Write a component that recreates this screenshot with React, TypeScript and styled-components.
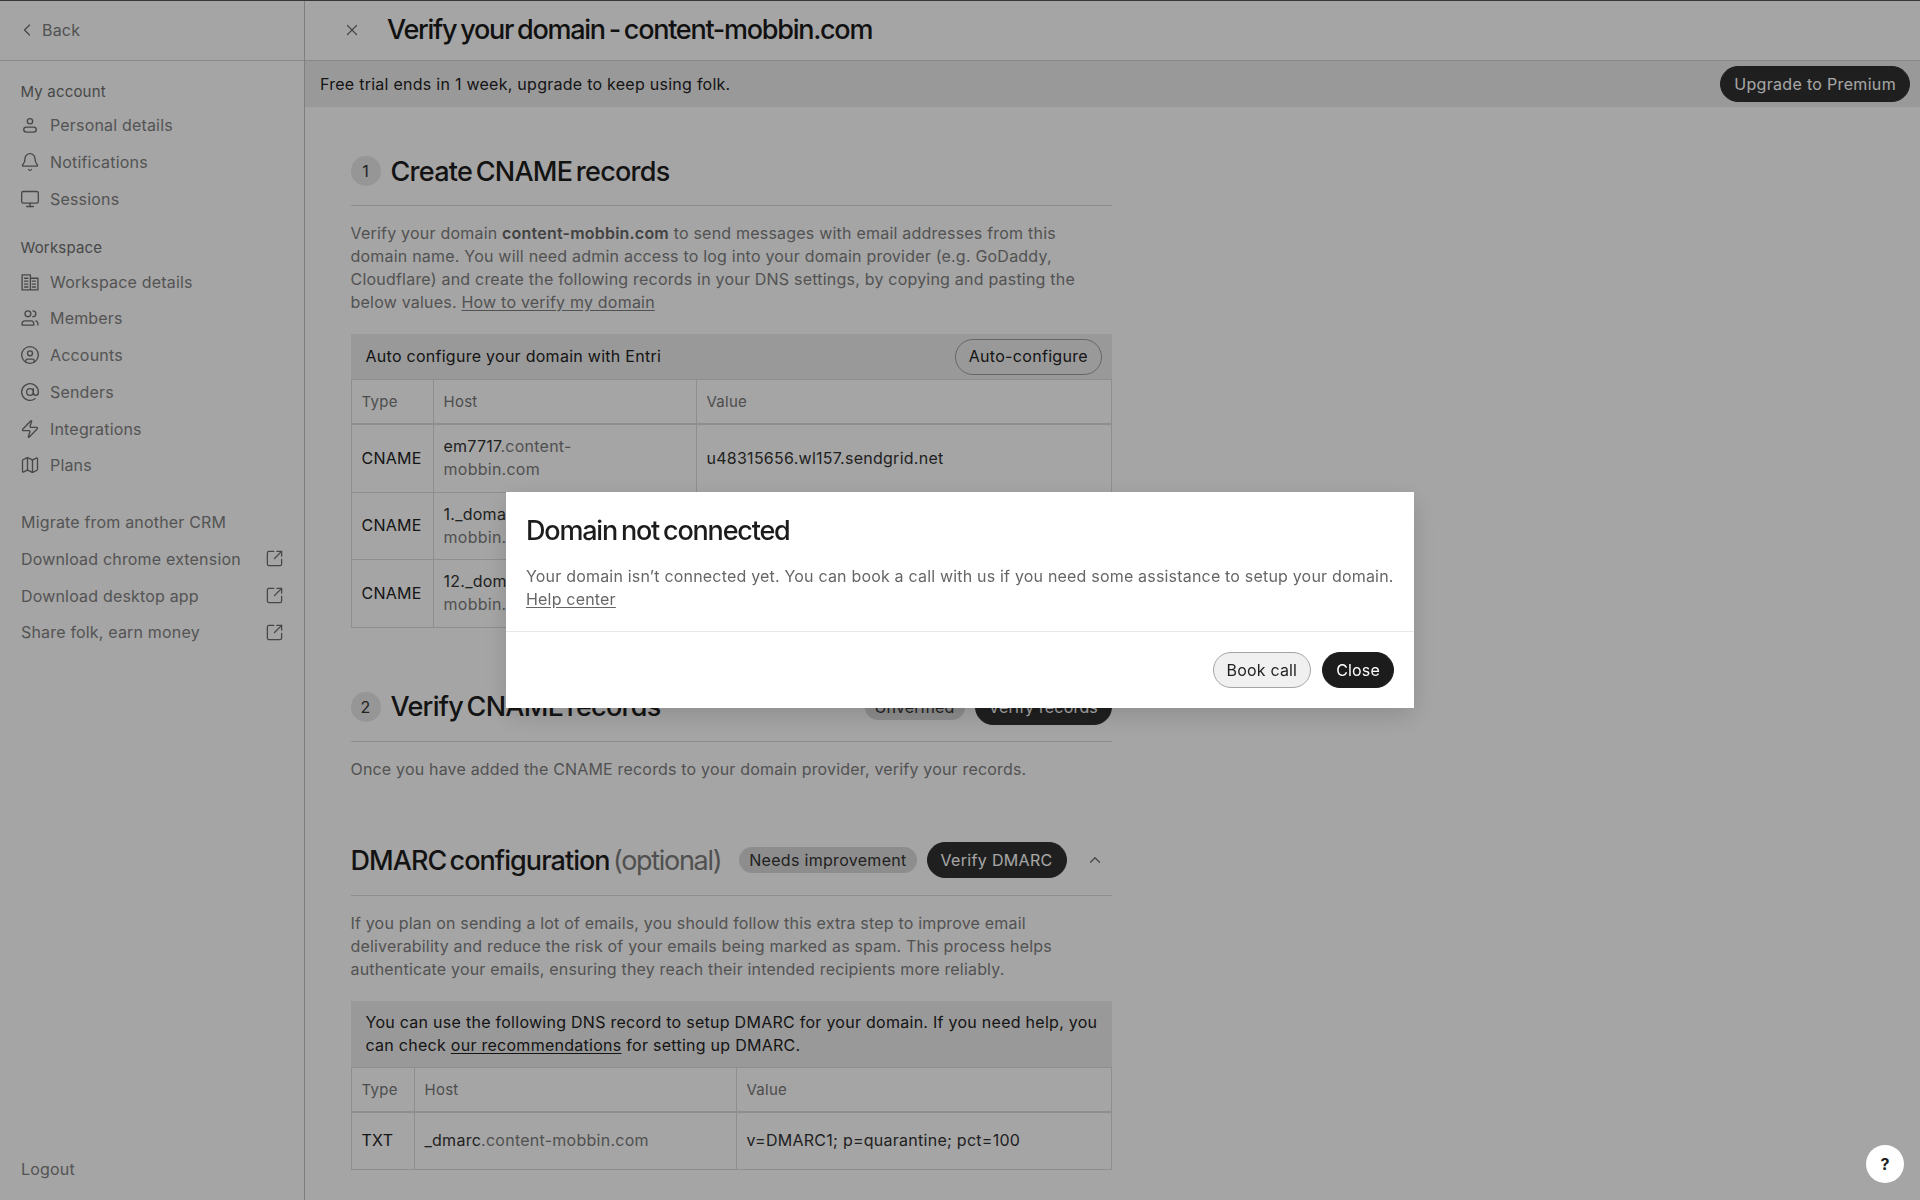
import React from "react";
import styled, { createGlobalStyle } from "styled-components";
import {
  AtSign, Bell, ChevronLeft, ChevronUp, CircleUser, Map as MapIcon, Monitor,
  SquareArrowOutUpRight, X, Zap,
} from "lucide-react";

const Global = createGlobalStyle`
  html, body { margin: 0; padding: 0; height: 100%; overflow: hidden; background: #fff; }
  body { font-family: Inter, "Liberation Sans", sans-serif; color: #1d1d1d; font-size: 16px; letter-spacing: 0.18px; }
  * { box-sizing: border-box; }
`;

const Shell = styled.div`
  display: flex; width: 1920px; height: 1200px; overflow: hidden; background: #fdfdfd;
  border-top: 1px solid #555;
`;
const Sidebar = styled.aside`
  width: 305px; flex: none; height: 100%; display: flex; flex-direction: column;
  border-right: 1px solid #c4c4c4;
`;
const BackRow = styled.div`
  height: 60px; flex: none; display: flex; align-items: center; gap: 5px; padding: 0 0 1px 17px;
  border-bottom: 1px solid #d2d2d2; color: #7d7d7d; font-size: 16px;
  svg { width: 20px; height: 20px; stroke-width: 1.5; color: #6e6e6e; }
`;
const SideBody = styled.div`
  flex: 1; display: flex; flex-direction: column; padding: 20px 19px 19px 20px;
`;
const GroupLabel = styled.div`
  height: 22px; line-height: 22px; font-size: 15px; color: #6f6f6f; margin-bottom: 4px; padding-left: 0.5px;
  &:not(:first-child) { margin-top: 20px; margin-bottom: 4px; }
`;
const NavRow = styled.div`
  height: 36.75px; display: flex; align-items: center; gap: 10px; color: #828282; font-size: 16px;
  svg { width: 20px; height: 20px; flex: none; stroke-width: 1.6; color: #6e6e6e; margin-left: 0; }
`;
const LinkList = styled.div`
  display: flex; flex-direction: column; margin-top: 20px; padding-left: 1px;
`;
const LinkRow = styled.div`
  height: 36.75px; display: flex; align-items: center; justify-content: space-between;
  color: #828282; font-size: 16px;
  svg { width: 19px; height: 19px; stroke-width: 1.6; color: #6e6e6e; margin-right: 1px; }
`;
const Logout = styled.div`
  margin-top: auto; padding-left: 1px; color: #828282; font-size: 16px; line-height: 24px;
`;
const Main = styled.main`
  flex: 1; min-width: 0; display: flex; flex-direction: column;
`;
const TopBar = styled.div`
  height: 60px; flex: none; display: flex; align-items: center; padding: 0 0 2px 38px; gap: 26px;
  border-bottom: 1px solid #d2d2d2;
  svg { width: 18px; height: 18px; color: #6e6e6e; stroke-width: 1.6; }
`;
const PageTitle = styled.h1`
  margin: 0; font-size: 27px; font-weight: 500; letter-spacing: -1.27px; word-spacing: -2px; color: #1b1b1b;
`;
const Banner = styled.div`
  height: 46px; flex: none; display: flex; align-items: center; justify-content: space-between;
  padding: 0 10px 0 15px; background: #ececec; font-size: 16px; color: #222; letter-spacing: 0.26px;
`;
const PillButton = styled.button<{ $variant?: "dark" | "outline" | "light" | "black" }>`
  height: 36px; border-radius: 18px; padding: 0 13px; font: inherit; font-size: 16px; white-space: nowrap;
  letter-spacing: inherit; flex: none;
  background: ${(p) =>
    p.$variant === "outline" ? "transparent" : p.$variant === "light" ? "#f0f0f0" : p.$variant === "black" ? "#1c1c1c" : "#303030"};
  color: ${(p) => (p.$variant === "outline" || p.$variant === "light" ? "#222" : "#fff")};
  border: 1px solid ${(p) =>
    p.$variant === "outline" ? "#9d9d9d" : p.$variant === "light" ? "#a4a4a4" : p.$variant === "black" ? "#1c1c1c" : "#303030"};
`;
const WideButton = styled(PillButton)`letter-spacing: 0.32px;`;
const Content = styled.div`
  width: 807px; padding: 44px 0 0 45.5px; display: flex; flex-direction: column;
`;
const SectionHead = styled.div`
  display: flex; align-items: center; gap: 10px; padding-bottom: 14px; height: 55px;
  border-bottom: 1px solid #dadada;
`;
const StepBadge = styled.span`
  width: 30px; height: 30px; border-radius: 50%; background: #e6e6e6; display: flex;
  align-items: center; justify-content: center; font-size: 16px; color: #333; flex: none;
`;
const Heading = styled.h2<{ $ls?: number }>`
  margin: 0; font-size: 27px; font-weight: 500; letter-spacing: ${(p) => p.$ls ?? -0.95}px; word-spacing: -3px;
  color: #1e1e1e; white-space: nowrap;
  span { font-weight: 400; color: #7c7c7c; letter-spacing: -1.3px; }
`;
const Spacer = styled.div`flex: 1;`;
const StatusPill = styled.span`
  height: 26px; padding: 0 10px; border-radius: 13px; background: #d9d9d9; color: #333;
  display: inline-flex; align-items: center; font-size: 16px; white-space: nowrap; flex: none;
`;
const Para = styled.p<{ $ls?: number }>`
  margin: 16px 0 0; font-size: 16px; line-height: 23px; color: #7f7f7f;
  letter-spacing: ${(p) => p.$ls ?? 0.18}px;
  b { font-weight: 600; color: #666; }
  a { color: inherit; text-decoration: underline; text-underline-offset: 2px; }
`;
const RecordCard = styled.div<{ $gap: number }>`
  margin-top: ${(p) => p.$gap}px;
`;
const CardHead = styled.div<{ $tall?: boolean }>`
  min-height: 46px; display: flex; align-items: center; justify-content: space-between;
  padding: ${(p) => (p.$tall ? "10px 11px 10px 15px" : "0 10px 0 15px")}; background: #ececec;
  border-bottom: 1px solid #dadada; font-size: 16px; line-height: 23px; color: #222; letter-spacing: 0.27px;
  a { color: inherit; text-decoration: underline; text-underline-offset: 2px; }
`;
const Table = styled.div<{ $cols: string }>`
  display: grid; grid-template-columns: ${(p) => p.$cols};
  border-left: 1px solid #dadada;
`;
const Cell = styled.div<{ $head?: boolean; $h: number; $dark?: boolean }>`
  height: ${(p) => p.$h}px; padding: 0 10px; display: flex; align-items: center;
  border-right: 1px solid #dadada; border-bottom: ${(p) => (p.$head ? 2 : 1)}px solid #dadada;
  font-size: ${(p) => (p.$head ? 15 : 16)}px; line-height: 23px; letter-spacing: 0.26px;
  color: ${(p) => (p.$head ? "#777" : p.$dark ? "#222" : "#333")};
  span { color: #7c7c7c; }
`;
const HostText = styled.div`max-width: 190px;`;
const Section2 = styled.div`margin-top: 59px;`;
const DmarcHead = styled(SectionHead)`gap: 0; height: 64px; padding-bottom: 6px; margin-top: 51px;`;
const DmarcPill = styled(StatusPill)`margin-left: 18px; padding: 0 10px; letter-spacing: 0.3px;`;
const DmarcBtn = styled(WideButton)`margin-left: 10px;`;
const Chevron = styled.span`
  margin-left: 19px; display: flex; color: #6e6e6e;
  svg { width: 18px; height: 18px; stroke-width: 1.6; }
`;
const Overlay = styled.div`
  position: fixed; inset: 0; background: rgba(0, 0, 0, 0.35); display: flex;
  align-items: center; justify-content: center; z-index: 10;
`;
const Modal = styled.div`
  width: 908px; height: 216px; background: #fff; display: flex; flex-direction: column;
  box-shadow: 0 8px 24px rgba(0, 0, 0, 0.14);
`;
const ModalBody = styled.div`
  height: 140px; flex: none; padding: 21px 20px 0; border-bottom: 1px solid #e8e8e8;
`;
const ModalTitle = styled.h3`
  margin: 0; font-size: 27px; font-weight: 500; letter-spacing: -1.2px; word-spacing: -2px; color: #1c1c1c; line-height: 36px;
`;
const ModalText = styled.p`
  margin: 16px 0 0; font-size: 16px; line-height: 23px; color: #666; letter-spacing: 0.19px;
  a { color: inherit; text-decoration: underline; text-underline-offset: 2px; }
`;
const ModalFoot = styled.div`
  flex: 1; display: flex; align-items: center; justify-content: flex-end; gap: 11px; padding: 0 20px;
`;
const HelpBtn = styled.div`
  position: fixed; right: 16px; bottom: 17px; width: 38px; height: 38px; border-radius: 50%;
  background: #fff; display: flex; align-items: center; justify-content: center;
  font-size: 16px; font-weight: 700; color: #222; z-index: 20;
`;

const Glyph: React.FC<{ children: React.ReactNode }> = ({ children }) => (
  <svg viewBox="0 0 24 24" fill="none" stroke="currentColor" strokeLinecap="round" strokeLinejoin="round">
    {children}
  </svg>
);
const UserGlyph = () => (
  <Glyph>
    <circle cx="12" cy="7.5" r="3.2" />
    <rect x="4.5" y="14.5" width="15" height="6" rx="3" />
  </Glyph>
);
const BuildingGlyph = () => (
  <Glyph>
    <path d="M2.5 21.5V3.5h10v18M12.5 7.5h9v14h-19" />
    <path d="M5.5 7.5h4M5.5 11h4M5.5 14.5h4M5.5 18h4M15 11h3.5M15 14.5h3.5M15 18h3.5" />
  </Glyph>
);
const MembersGlyph = () => (
  <Glyph>
    <circle cx="9.5" cy="7" r="3.5" />
    <path d="M2.5 20.5v-1.5a3.5 3.5 0 0 1 3.5-3.5h7a3.5 3.5 0 0 1 3.5 3.5v1.5z" />
    <path d="M15.5 3.5a3.5 3.5 0 0 1 0 7M19 15.5c1.5.5 2.5 2 2.5 3.5v1.5" />
  </Glyph>
);

const Ext = () => <SquareArrowOutUpRight />;

export default function App() {
  return (
    <>
      <Global />
      <Shell>
        <Sidebar>
          <BackRow><ChevronLeft />Back</BackRow>
          <SideBody>
            <GroupLabel>My account</GroupLabel>
            <NavRow><UserGlyph />Personal details</NavRow>
            <NavRow><Bell />Notifications</NavRow>
            <NavRow><Monitor />Sessions</NavRow>
            <GroupLabel>Workspace</GroupLabel>
            <NavRow><BuildingGlyph />Workspace details</NavRow>
            <NavRow><MembersGlyph />Members</NavRow>
            <NavRow><CircleUser />Accounts</NavRow>
            <NavRow><AtSign />Senders</NavRow>
            <NavRow><Zap />Integrations</NavRow>
            <NavRow><MapIcon />Plans</NavRow>
            <LinkList>
              <LinkRow>Migrate from another CRM</LinkRow>
              <LinkRow>Download chrome extension<Ext /></LinkRow>
              <LinkRow>Download desktop app<Ext /></LinkRow>
              <LinkRow>Share folk, earn money<Ext /></LinkRow>
            </LinkList>
            <Logout>Logout</Logout>
          </SideBody>
        </Sidebar>
        <Main>
          <TopBar><X /><PageTitle>Verify your domain - content-mobbin.com</PageTitle></TopBar>
          <Banner>
            Free trial ends in 1 week, upgrade to keep using folk.
            <WideButton>Upgrade to Premium</WideButton>
          </Banner>
          <Content>
            <SectionHead>
              <StepBadge>1</StepBadge>
              <Heading $ls={-0.72}>Create CNAME records</Heading>
            </SectionHead>
            <Para $ls={0.21}>
              Verify your domain <b>content-mobbin.com</b> to send messages with email addresses from this domain name. You will need admin access to log into your domain provider (e.g. GoDaddy, Cloudflare) and create the following records in your DNS settings, by copying and pasting the below values. <a>How to verify my domain</a>
            </Para>
            <RecordCard $gap={20}>
              <CardHead>
                Auto configure your domain with Entri
                <WideButton $variant="outline">Auto-configure</WideButton>
              </CardHead>
              <Table $cols="82px 263px 1fr">
                <Cell $head $h={45}>Type</Cell><Cell $head $h={45}>Host</Cell><Cell $head $h={45}>Value</Cell>
                <Cell $h={67.5} $dark>CNAME</Cell><Cell $h={67.5}><HostText>em7717<span>.content-mobbin.com</span></HostText></Cell><Cell $h={67.5}>u48315656.wl157.sendgrid.net</Cell>
                <Cell $h={67.5} $dark>CNAME</Cell><Cell $h={67.5}><HostText>1._domainkey<span>.content-mobbin.com</span></HostText></Cell><Cell $h={67.5}>u48315656.wl157.sendgrid.net</Cell>
                <Cell $h={67.5} $dark>CNAME</Cell><Cell $h={67.5}><HostText>12._domainkey<span>.content-mobbin.com</span></HostText></Cell><Cell $h={67.5}>u48315656.wl157.sendgrid.net</Cell>
              </Table>
            </RecordCard>
            <Section2>
              <SectionHead>
                <StepBadge>2</StepBadge>
                <Heading $ls={-0.72}>Verify CNAME records</Heading>
                <Spacer />
                <StatusPill>Unverified</StatusPill>
                <PillButton>Verify records</PillButton>
              </SectionHead>
              <Para>Once you have added the CNAME records to your domain provider, verify your records.</Para>
            </Section2>
            <DmarcHead>
              <Heading>DMARC configuration <span>(optional)</span></Heading>
              <DmarcPill>Needs improvement</DmarcPill>
              <DmarcBtn>Verify DMARC</DmarcBtn>
              <Chevron><ChevronUp /></Chevron>
            </DmarcHead>
            <Para>
              If you plan on sending a lot of emails, you should follow this extra step to improve email deliverability and reduce the risk of your emails being marked as spam. This process helps authenticate your emails, ensuring they reach their intended recipients more reliably.
            </Para>
            <RecordCard $gap={20}>
              <CardHead $tall>
                <div>You can use the following DNS record to setup DMARC for your domain. If you need help, you can check <a>our recommendations</a> for setting up DMARC.</div>
              </CardHead>
              <Table $cols="63px 322px 1fr">
                <Cell $head $h={45}>Type</Cell><Cell $head $h={45}>Host</Cell><Cell $head $h={45}>Value</Cell>
                <Cell $h={57} $dark>TXT</Cell><Cell $h={57}><div>_dmarc<span>.content-mobbin.com</span></div></Cell><Cell $h={57}>v=DMARC1; p=quarantine; pct=100</Cell>
              </Table>
            </RecordCard>
          </Content>
        </Main>
      </Shell>
      <Overlay>
        <Modal>
          <ModalBody>
            <ModalTitle>Domain not connected</ModalTitle>
            <ModalText>
              Your domain isn’t connected yet. You can book a call with us if you need some assistance to setup your domain. <a>Help center</a>
            </ModalText>
          </ModalBody>
          <ModalFoot>
            <PillButton $variant="light">Book call</PillButton>
            <PillButton $variant="black">Close</PillButton>
          </ModalFoot>
        </Modal>
      </Overlay>
      <HelpBtn>?</HelpBtn>
    </>
  );
}
